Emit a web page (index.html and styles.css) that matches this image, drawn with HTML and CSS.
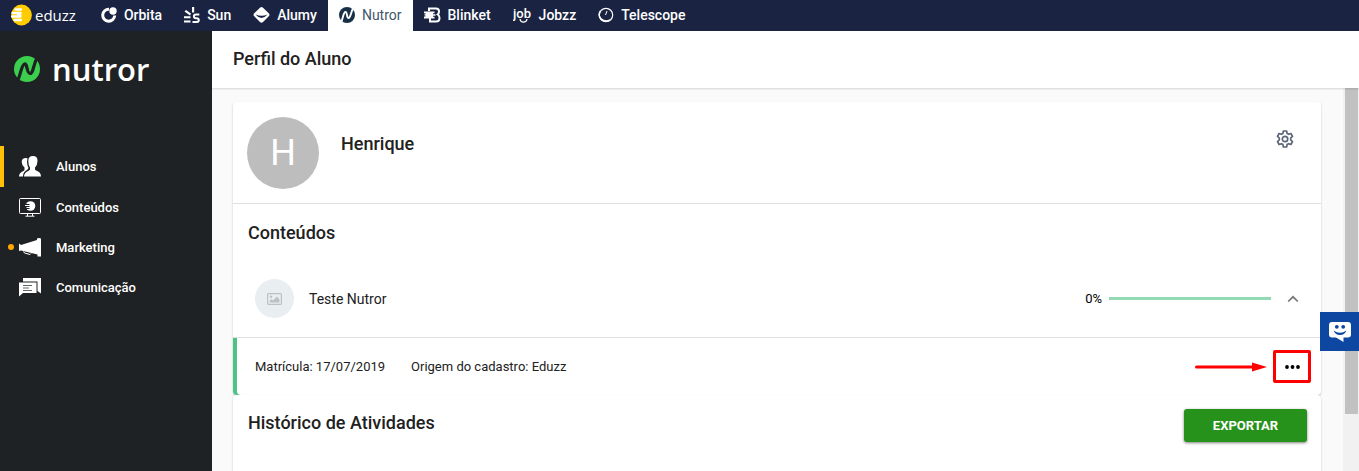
FILE: index.html
```html
<!DOCTYPE html>
<html lang="pt-BR">

<head>
    <meta charset="UTF-8">
    <meta name="viewport" content="width=device-width, initial-scale=1.0">
    <title>Nutror - Perfil do Aluno</title>
    <link rel="stylesheet" href="styles.css">
</head>

<body>
    <!-- Barra de produtos -->
    <nav class="topbar">
        <a class="brand" href="#">
            <svg width="21" height="22" viewBox="0 0 21 22">
                <circle cx="10.5" cy="11" r="10.4" fill="#fc0"/>
                <path d="M4.500 5.500H10M1.500 9H9M1 12.500H9M3.500 16H10" stroke="#fff" stroke-width="2.300" stroke-linecap="round"/>
                <path d="M6 8h4.500v5.500H6z" fill="#fff"/>
            </svg>
            <span>eduzz</span>
        </a>
        <a class="product" href="#">
            <svg width="16" height="16" viewBox="0 0 16 16">
                <path d="M8 2.200A6 6 0 1 0 13.700 8.500" fill="none" stroke="#fff" stroke-width="3"/>
                <circle cx="12" cy="4" r="3.700" fill="#fff"/>
            </svg>
            <span>Orbita</span>
        </a>
        <a class="product" href="#">
            <svg width="16" height="16" viewBox="0 0 16 16">
                <path d="M8 0h2.200v5.500H8zM.5 4.500L2 3l5 3.500L6 8.500zM0 9.200h6.500v2H0zM0 13.500h6.500v2H0z" fill="#fff"/>
                <path d="M15.300 7.500h-3.300c-2.800 0-2.800 3.700 0 3.700h.7c2.800 0 2.800 3.800 0 3.800H8.500" fill="none" stroke="#fff" stroke-width="2"/>
            </svg>
            <span>Sun</span>
        </a>
        <a class="product" href="#">
            <svg width="17" height="16" viewBox="0 0 17 16">
                <path d="M8.500 0Q9.300 0 10 .7L16 6.500Q17 8 16 9L10 15Q8.500 16.500 7 15L1 9Q0 8 1 6.500L7 .7Q7.700 0 8.500 0z" fill="#fff"/>
                <path d="M2.500 7.500Q8.500 14.500 14.500 7.500Q8.500 10 2.500 7.500z" fill="#1a2442"/>
            </svg>
            <span>Alumy</span>
        </a>
        <a class="product product-active" href="#">
            <svg width="16" height="16" viewBox="0 0 16 16">
                <circle cx="8" cy="8" r="8" fill="#173047"/>
                <path d="M2.500 14.500C4 11 4.500 5 6.500 5s1 6 3 6S12 5 14 1.500" fill="none" stroke="#fff" stroke-width="1.900"/>
            </svg>
            <span>Nutror</span>
        </a>
        <a class="product" href="#">
            <svg width="17" height="16" viewBox="0 0 17 16">
                <path d="M5 4V1.500h7q3 0 3 3 0 2-1.300 3Q15.500 8.500 15.500 11q0 3.500-3.500 3.500H6V11" fill="none" stroke="#fff" stroke-width="2"/>
                <path d="M0 4.500h10.500v1.700H9v1h2.500v1.600H9v1h1.500v1.700H0V9.500h1.500V8.600H.5V7.200h1V6.300H0z" fill="#fff"/>
            </svg>
            <span>Blinket</span>
        </a>
        <a class="product" href="#">
            <svg width="19" height="16" viewBox="0 0 19 16">
                <text class="job-mark" x="0" y="11">job</text>
                <path d="M7 12Q7.500 15.200 10.500 15.200T14 12" fill="none" stroke="#fff" stroke-width="1.300"/>
            </svg>
            <span>Jobzz</span>
        </a>
        <a class="product" href="#">
            <svg width="16" height="16" viewBox="0 0 16 16">
                <circle cx="8" cy="8" r="6.700" fill="none" stroke="#fff" stroke-width="1.200"/>
                <path d="M2.500 4a6 6 0 0 0 3 9.500 8 8 0 0 0 6.500-.5" fill="none" stroke="#fff" stroke-width="1.500"/>
                <path d="M9 4L7.500 8" stroke="#fff" stroke-width="1"/>
            </svg>
            <span>Telescope</span>
        </a>
    </nav>

    <div class="app">
        <!-- Menu lateral -->
        <aside class="sidebar">
            <a class="logo" href="#">
                <svg width="26" height="26" viewBox="0 0 26 26">
                    <circle cx="13" cy="13" r="13" fill="#3ccf4e"/>
                    <path d="M4 24C7 17 7.500 9 10.500 8s2 9.500 5.500 9.500S19 9 23 2" fill="none" stroke="#1f2224" stroke-width="3.200"/>
                </svg>
                <span>nutror</span>
            </a>
            <ul class="menu">
                <li>
                    <a class="menu-item menu-active" href="#">
                        <svg width="22" height="21" viewBox="0 0 22 21">
                            <path d="M0 20.500q0-4 4.500-5.500l1-1V11.500Q2.700 9 2.700 6 2.700 2 7 2q1 0 1.500.3Q7.500 6 8.500 9.500L9.500 12q-.5 1.500-3 3Q4 16.500 4 20.500z" fill="#fff"/>
                            <path d="M5 20.500q0-4 5-6l1-1V11.500Q9.300 9.500 9.300 5q0-5 4.700-5t4.500 5q0 4-2.500 6.500v2l1 1q5 1.500 5 6z" fill="#fff"/>
                        </svg>
                        <span>Alunos</span>
                    </a>
                </li>
                <li>
                    <a class="menu-item" href="#">
                        <svg width="22" height="19" viewBox="0 0 22 19">
                            <rect x=".5" y=".5" width="21" height="15" rx="1" fill="none" stroke="#fff"/>
                            <path d="M8.500 16v2M13.500 16v2M6.500 18.200h9" stroke="#fff"/>
                            <circle cx="11.500" cy="8" r="4.800" fill="#fff"/>
                            <path d="M5.500 5h5v6h-5z" fill="#1f2224"/>
                            <path d="M7.500 5.500h4M6 7.500h5M7.500 9.500h4" stroke="#fff"/>
                        </svg>
                        <span>Conteúdos</span>
                    </a>
                </li>
                <li>
                    <a class="menu-item menu-alert" href="#">
                        <svg width="22" height="19" viewBox="0 0 22 19">
                            <path d="M0 5.500l2 1.500L18 2V.5Q20-.5 22 .5v18h-3.500v-2L2 12.500 0 13z" fill="#fff"/>
                            <path d="M4.500 13.500l1 1.500 5.500 1.500 1-1" fill="none" stroke="#fff"/>
                        </svg>
                        <span>Marketing</span>
                    </a>
                </li>
                <li>
                    <a class="menu-item" href="#">
                        <svg width="22" height="19" viewBox="0 0 22 19">
                            <path d="M4 0h18v15.500L18.500 13V3.500H4z" fill="#fff"/>
                            <path d="M0 4.500h17.500V15H4l-4 3.500z" fill="#fff"/>
                            <path d="M4 7.500h9M4 10h6M4 12.500h9" stroke="#1f2224" stroke-width=".7"/>
                        </svg>
                        <span>Comunicação</span>
                    </a>
                </li>
            </ul>
        </aside>

        <main class="main">
            <header class="page-header">
                <h1>Perfil do Aluno</h1>
            </header>

            <div class="scroll-area">
                <div class="content">
                    <section class="card">
                        <div class="profile">
                            <div class="avatar">H</div>
                            <h2>Henrique</h2>
                            <button class="icon-button settings" aria-label="Configurações">
                                <svg width="18" height="18" viewBox="0 0 18 18" fill="none" stroke="#5b6577" stroke-width="1.700" stroke-linejoin="round">
                                    <path d="M7.400 1h3.200l.5 2.400 1.500.9 2.300-.8 1.600 2.800L14.700 8v2l1.800 1.700-1.600 2.800-2.300-.8-1.500.9-.5 2.400H7.400l-.5-2.400-1.500-.9-2.300.8-1.600-2.800L3.300 10V8L1.500 6.300l1.600-2.800 2.300.8 1.500-.9z"/>
                                    <circle cx="9" cy="9" r="2.700"/>
                                </svg>
                            </button>
                        </div>

                        <div class="contents">
                            <h2>Conteúdos</h2>
                            <div class="course">
                                <div class="thumb">
                                    <svg width="15" height="12" viewBox="0 0 15 12">
                                        <rect x=".6" y=".6" width="13.800" height="10.800" rx="1" fill="none" stroke="#bcc1c4" stroke-width="1.200"/>
                                        <circle cx="4" cy="3.700" r="1.200" fill="#bcc1c4"/>
                                        <path d="M2.500 9.500V8l2-2 1.500 1.500L10 3.500l2.500 3v3z" fill="#bcc1c4"/>
                                    </svg>
                                </div>
                                <span class="course-name">Teste Nutror</span>
                                <span class="percent">0%</span>
                                <div class="progress"></div>
                                <button class="icon-button" aria-label="Recolher">
                                    <svg width="12" height="8" viewBox="0 0 12 8">
                                        <path d="M1.200 6.500L6 1.800l4.800 4.700" fill="none" stroke="#757575" stroke-width="1.700"/>
                                    </svg>
                                </button>
                            </div>
                        </div>

                        <div class="enrollment">
                            <span>Matrícula: 17/07/2019</span>
                            <span>Origem do cadastro: Eduzz</span>
                            <svg class="arrow" width="72" height="10" viewBox="0 0 72 10">
                                <path d="M1.500 5H60" stroke="#f00" stroke-width="3" stroke-linecap="round"/>
                                <path d="M57 .5L72 5 57 9.500z" fill="#f00"/>
                            </svg>
                            <button class="icon-button more" aria-label="Mais opções">
                                <svg width="15" height="4" viewBox="0 0 15 4">
                                    <circle cx="2" cy="2" r="1.900"/>
                                    <circle cx="7.500" cy="2" r="1.900"/>
                                    <circle cx="13" cy="2" r="1.900"/>
                                </svg>
                            </button>
                        </div>
                    </section>

                    <section class="card history">
                        <h2>Histórico de Atividades</h2>
                        <button class="btn-export">EXPORTAR</button>
                    </section>
                </div>

                <div class="scrollbar">
                    <div class="scrollbar-thumb"></div>
                </div>
            </div>
        </main>
    </div>

    <!-- Botão de chat -->
    <button class="chat" aria-label="Chat">
        <svg width="22" height="20" viewBox="0 0 22 20">
            <path d="M3 0h16q3 0 3 3v9.500q0 3-3 3h-4.500V20L7 15.500H3q-3 0-3-3V3q0-3 3-3z" fill="#fff"/>
            <circle cx="7.800" cy="4.800" r="1.900" fill="#0d47a1"/>
            <circle cx="14.200" cy="4.800" r="1.900" fill="#0d47a1"/>
            <path d="M4.500 8.500Q11 13 17.500 8.500 15.500 13 11 13T4.500 8.500z" fill="#0d47a1"/>
        </svg>
    </button>
</body>

</html>
```

FILE: styles.css
```css
* {
    box-sizing: border-box;
}

body {
    margin: 0;
    height: 100vh;
    display: flex;
    flex-direction: column;
    overflow: hidden;
    background-color: #fafafa;
    color: #212121;
    font-family: Roboto, sans-serif;
    font-size: 13px;
}

a {
    color: inherit;
    text-decoration: none;
}

svg {
    display: block;
    flex-shrink: 0;
}

h1,
h2 {
    margin: 0;
    font-size: 18px;
    font-weight: 500;
    line-height: 24px;
}

button {
    font-family: inherit;
    cursor: pointer;
}

/* Barra de produtos */
.topbar {
    display: flex;
    flex-shrink: 0;
    height: 31px;
    background-color: #1a2442;
    color: #fff;
    font-size: 14px;
    font-weight: 500;
}

.brand {
    display: flex;
    align-items: center;
    gap: 3px;
    padding: 0 14px 2px 11px;
    font-family: "Open Sans", sans-serif;
    font-size: 15px;
    font-weight: 400;
}

.product {
    display: flex;
    align-items: center;
    gap: 7px;
    padding: 0 11px 2px 11px;
}

.product-active {
    background-color: #fff;
    color: #3f566b;
    font-weight: 400;
}

.job-mark {
    fill: #fff;
    font-size: 13px;
    font-weight: 500;
}

.app {
    display: flex;
    flex: 1;
    min-height: 0;
}

/* Menu lateral */
.sidebar {
    flex-shrink: 0;
    width: 212px;
    background-color: #1f2224;
    color: #fff;
}

.logo {
    display: flex;
    align-items: center;
    gap: 12px;
    height: 78px;
    padding: 0 0 2px 14px;
    font-family: "Open Sans", sans-serif;
    font-size: 31px;
    font-weight: 600;
}

.menu {
    margin: 0;
    padding: 37px 0 0;
    list-style: none;
}

.menu-item {
    position: relative;
    display: flex;
    align-items: center;
    gap: 15px;
    height: 40px;
    padding-left: 19px;
    font-weight: 500;
}

.menu-active {
    height: 41px;
    padding-left: 15px;
    border-left: 4px solid #ffc107;
}

.menu-alert::before {
    content: "";
    position: absolute;
    left: 8px;
    width: 6px;
    height: 6px;
    border-radius: 50%;
    background-color: #ffa800;
}

/* Conteúdo */
.main {
    display: flex;
    flex: 1;
    flex-direction: column;
    min-width: 0;
}

.page-header {
    z-index: 1;
    display: flex;
    align-items: center;
    flex-shrink: 0;
    height: 57px;
    padding: 0 21px 2px;
    background-color: #fff;
    box-shadow: 0 1px 2px rgba(0, 0, 0, 0.15);
}

.scroll-area {
    display: flex;
    flex: 1;
    min-height: 0;
}

.content {
    flex: 1;
    padding: 14px 22px 0 21px;
    overflow: hidden;
}

.card {
    border-radius: 4px;
    background-color: #fff;
    box-shadow: 0 1px 2px rgba(0, 0, 0, 0.25);
}

.profile {
    display: flex;
    align-items: flex-start;
    gap: 22px;
    padding: 15px 14px 14px;
    border-bottom: 1px solid #e0e0e0;
}

.profile h2 {
    padding-top: 15px;
}

.avatar {
    width: 72px;
    height: 72px;
    border-radius: 50%;
    background-color: #bdbdbd;
    color: #fff;
    font-size: 36px;
    line-height: 72px;
    text-align: center;
}

.icon-button {
    display: flex;
    align-items: center;
    justify-content: center;
    padding: 0;
    border: none;
    background: none;
}

.settings {
    width: 44px;
    height: 44px;
    margin-left: auto;
}

.contents {
    padding: 17px 15px 19px;
}

.course {
    display: flex;
    align-items: center;
    padding: 34px 7px 0;
}

.thumb {
    display: flex;
    align-items: center;
    justify-content: center;
    width: 39px;
    height: 39px;
    border-radius: 50%;
    background-color: #e9eef1;
}

.course-name {
    flex: 1;
    padding-left: 15px;
    font-size: 14px;
}

.percent {
    color: #000;
}

.progress {
    width: 162px;
    height: 3px;
    margin: 0 16px 0 7px;
    background-color: #92dab3;
}

.enrollment {
    display: flex;
    align-items: center;
    gap: 26px;
    height: 58px;
    padding: 0 10px 0 22px;
    border-top: 1px solid #e0e0e0;
    border-radius: 0 0 4px 4px;
    box-shadow: inset 4px 0 #4dc485;
}

.arrow {
    margin-left: auto;
}

.more {
    width: 38px;
    height: 33px;
    margin-left: -20px;
    border: 3px solid #f00;
    border-radius: 2px;
}

.history {
    display: flex;
    align-items: flex-start;
    justify-content: space-between;
    min-height: 120px;
    padding: 14px 14px 14px 15px;
}

.history h2 {
    padding-top: 2px;
}

.btn-export {
    width: 123px;
    height: 33px;
    border: none;
    border-radius: 3px;
    background-color: #26921b;
    color: #fff;
    font-size: 13px;
    font-weight: 700;
    box-shadow: 0 1px 3px rgba(0, 0, 0, 0.5);
}

.scrollbar {
    width: 16px;
    padding: 0 1px 0 2px;
    background-color: #f1f1f1;
}

.scrollbar-thumb {
    height: 85%;
    background-color: #c1c1c1;
}

/* Botão de chat */
.chat {
    position: fixed;
    right: 0;
    bottom: 120px;
    z-index: 2;
    display: flex;
    align-items: center;
    justify-content: center;
    width: 39px;
    height: 39px;
    padding: 0;
    border: none;
    background-color: #0d47a1;
}
```
